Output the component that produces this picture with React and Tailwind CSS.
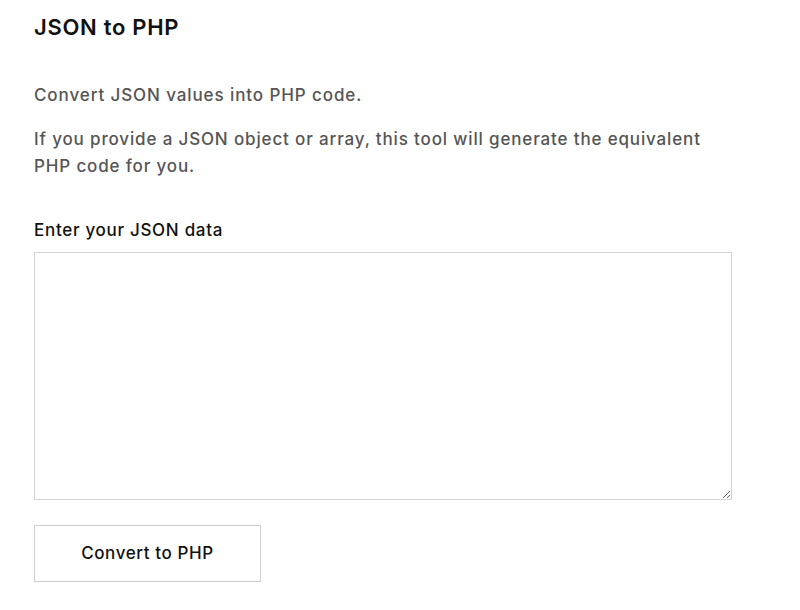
export default function App() {
  return (
    <div className="w-[800px] h-[610px] bg-white overflow-hidden px-[34px] pt-[13px]">
      <h1 className="font-['Inter',sans-serif] text-[22px] leading-[28px] font-semibold text-[#111] tracking-[0.7px]">JSON to PHP</h1>
      <p className="mt-[41px] font-['Inter',sans-serif] text-[17px] leading-[27px] font-medium text-[#555] tracking-[0.9px]">Convert JSON values into PHP code.</p>
      <p className="mt-[17px] w-[690px] font-['Inter',sans-serif] text-[17px] leading-[27px] font-medium text-[#555] tracking-[0.85px]">If you provide a JSON object or array, this tool will generate the equivalent PHP code for you.</p>
      <label className="block mt-[38px] font-['Inter',sans-serif] text-[17px] leading-[24px] font-medium text-[#111] tracking-[0.7px]">Enter your JSON data</label>
      <textarea className="block mt-[10px] w-[698px] h-[248px] border border-[#d4d4d4] bg-white outline-none" />
      <button className="mt-[25px] w-[227px] h-[57px] border border-[#cfcfcf] bg-white font-['Inter',sans-serif] text-[17px] font-medium text-[#111] tracking-[0.6px]">Convert to PHP</button>
    </div>
  );
}
